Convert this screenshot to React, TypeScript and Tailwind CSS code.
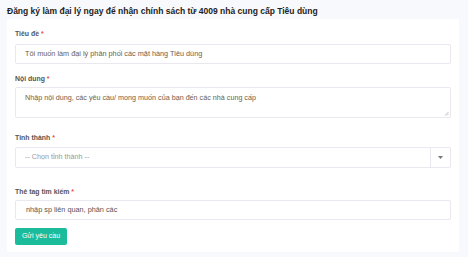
import React from "react";

const F = { fontFamily: '"Liberation Sans", Arial, sans-serif' };

function Label({ text }: { text: string }) {
  return (
    <div className="text-[6.9px] font-bold text-[#555] leading-[9px]">
      {text} <span className="text-[#e74c3c]">*</span>
    </div>
  );
}

export default function App() {
  return (
    <div style={F} className="w-[468px] h-[257px] bg-[#f8f9fc] overflow-hidden">
      <div className="pl-[7px] pt-[6px] h-[19px] text-[8.5px] font-bold text-[#222] leading-[11px]">
        Đăng ký làm đại lý ngay để nhận chính sách từ 4009 nhà cung cấp Tiêu dùng
      </div>
      <div className="ml-[7px] w-[452px] h-[233px] bg-white px-[8px] pt-[10px]">
        <Label text="Tiêu đề" />
        <div className="mt-[6px] h-[20px] border border-[#e8e8ee] rounded-[2px] flex items-center pl-[9px] text-[7.3px] text-[#6e5e4e]">
          Tôi muốn làm đại lý phân phối các mặt hàng Tiêu dùng
        </div>
        <div className="mt-[10px]">
          <Label text="Nội dung" />
        </div>
        <div className="relative mt-[4px] h-[31px] border border-[#e8e8ee] rounded-[2px] pl-[9px] pt-[5px] text-[7.2px] text-[#6e5e4e]">
          Nhập nội dung, các yêu cầu/ mong muốn của bạn đến các nhà cung cấp
          <svg className="absolute right-[1px] bottom-[1px]" width="5" height="5" viewBox="0 0 5 5">
            <path d="M1 4.5 L4.5 1 M3 4.5 L4.5 3" stroke="#999" strokeWidth="0.6" />
          </svg>
        </div>
        <div className="mt-[15px]">
          <Label text="Tỉnh thành" />
        </div>
        <div className="mt-[5px] h-[21px] border border-[#e8e8ee] rounded-[2px] flex items-center text-[7.2px] text-[#999]">
          <div className="flex-1 pl-[9px]">-- Chọn tỉnh thành --</div>
          <div className="w-[20px] h-full border-l border-[#e8e8ee] flex items-center justify-center">
            <svg width="5" height="3" viewBox="0 0 5 3">
              <path d="M0 0 L5 0 L2.5 3 Z" fill="#777" />
            </svg>
          </div>
        </div>
        <div className="mt-[19px]">
          <Label text="Thẻ tag tìm kiếm" />
        </div>
        <div className="mt-[4px] h-[20px] border border-[#e8e8ee] rounded-[2px] flex items-center pl-[10px] text-[7.3px] text-[#555]">
          nhập sp liên quan, phân các
        </div>
        <div className="mt-[8px] w-[52px] h-[17px] rounded-[2px] bg-[#1abc9c] text-white text-[7px] flex items-center justify-center">
          Gửi yêu cầu
        </div>
      </div>
    </div>
  );
}
